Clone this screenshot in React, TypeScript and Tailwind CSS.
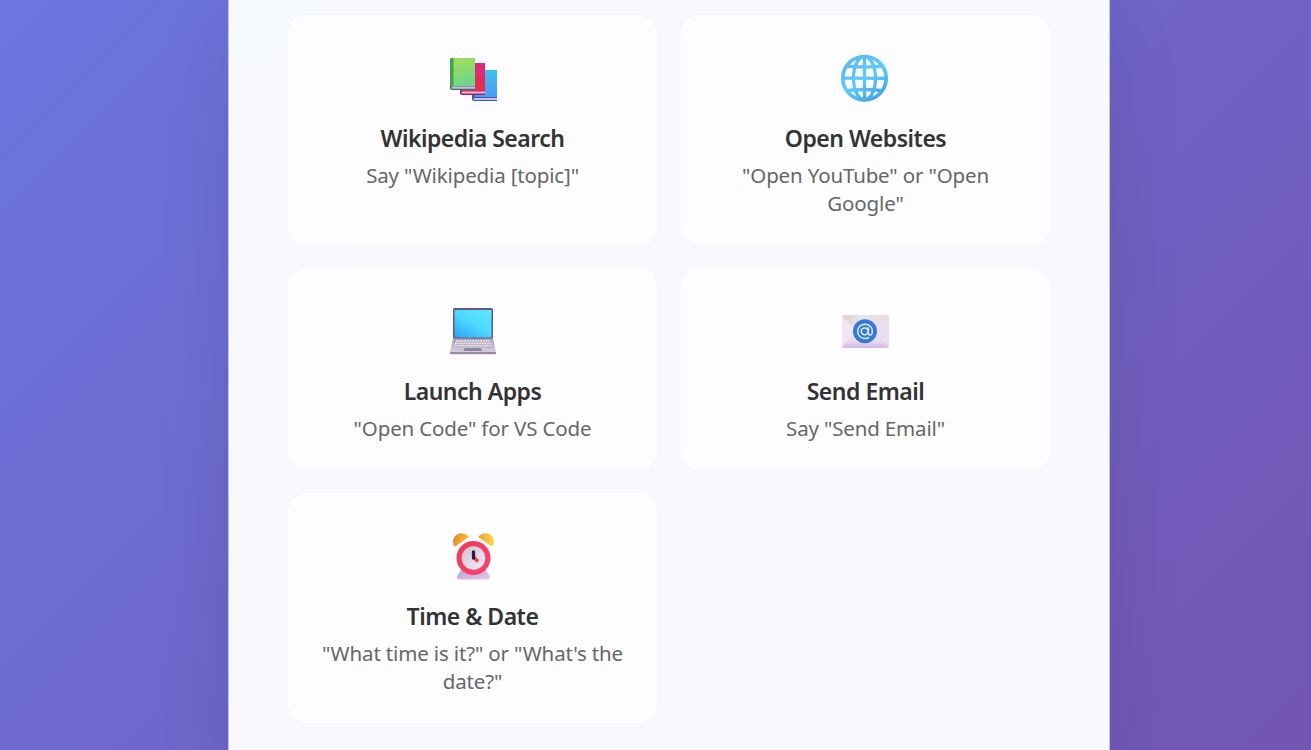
import React from "react";

function Books() {
  return (
    <svg viewBox="0 0 66 66" className="h-[66px] w-[66px]">
      <defs>
        <linearGradient id="bg1" x1="0" y1="0" x2="0.3" y2="1"><stop stopColor="#a6df54" /><stop offset="1" stopColor="#72d68a" /></linearGradient>
        <linearGradient id="bg2" x1="0" y1="0" x2="0" y2="1"><stop stopColor="#d92a7c" /><stop offset="1" stopColor="#e62d49" /></linearGradient>
        <linearGradient id="bg3" x1="0" y1="0" x2="0.2" y2="1"><stop stopColor="#3cc5f2" /><stop offset="1" stopColor="#4a9ff0" /></linearGradient>
      </defs>
      <path d="M33 25H56q1 0 1 1V56H34q-2 0-2-2V26z" fill="#2765bd" />
      <path d="M35 25H56q1 0 1 1V52H35z" fill="url(#bg3)" />
      <path d="M34 53H57v2H34q-1-1 0-2z" fill="#d9b4ed" />
      <path d="M21 18H44q1 0 1 1V50H22q-2 0-2-2V19z" fill="#b31d55" />
      <path d="M23 18H44q1 0 1 1V46H23z" fill="url(#bg2)" />
      <path d="M22 46.5H45v2H22q-1-1 0-2z" fill="#e5bce9" />
      <path d="M12 13H34q1 0 1 1V45H12q-2 0-2-2V15q0-2 2-2z" fill="#278064" />
      <path d="M12 13H34q1 0 1 1V41H10V15q0-2 2-2z" fill="url(#bg1)" />
      <path d="M12 13h1.500v28H10V15q0-2 2-2z" fill="#45a246" />
      <path d="M12 41.500H35v2.300H12q-1-1.100 0-2.300z" fill="#d2b7e5" />
    </svg>
  );
}

function Globe() {
  return (
    <svg viewBox="0 0 66 66" className="mr-[2px] h-[66px] w-[66px]" fill="none">
      <defs>
        <linearGradient id="gg" gradientUnits="userSpaceOnUse" x1="18" y1="12" x2="44" y2="57"><stop stopColor="#5bb9f3" /><stop offset="0.5" stopColor="#5ccbfc" /><stop offset="1" stopColor="#449fe8" /></linearGradient>
      </defs>
      <g stroke="url(#gg)" strokeWidth="3.300">
        <circle cx="32.500" cy="33.200" r="21.700" strokeWidth="3.700" />
        <ellipse cx="32.500" cy="33.200" rx="11" ry="21.700" />
        <path d="M32.400 11L32.600 56M10 33.100L55 33.300M14 20.600q5 1.400 18.500 1.400t18.500-1.400M14 46.200q5-1.700 18.500-1.700t18.500 1.700" />
      </g>
    </svg>
  );
}

function Laptop() {
  return (
    <svg viewBox="0 0 66 66" className="h-[66px] w-[66px]">
      <defs>
        <linearGradient id="ls" x1="0" y1="1" x2="0.8" y2="0"><stop stopColor="#2ba3f2" /><stop offset="0.55" stopColor="#4dd8ff" /><stop offset="1" stopColor="#5ce5ff" /></linearGradient>
        <linearGradient id="lb" x1="0" y1="0" x2="0" y2="1"><stop stopColor="#aaa2b5" /><stop offset="1" stopColor="#d6cddd" /></linearGradient>
      </defs>
      <rect x="13" y="10" width="40" height="31" rx="1.500" fill="#62568a" />
      <rect x="14.500" y="12" width="37" height="27.500" fill="url(#ls)" />
      <path d="M13 40.500H53L56 54H10z" fill="url(#lb)" />
      <path d="M10 54H56v1.300q0 1-1 1H11q-1 0-1-1z" fill="#978ba6" />
      <path d="M16 43H50" stroke="#eee9f2" strokeWidth="1.500" strokeDasharray="1.700 1" />
      <path d="M15 45.400H51" stroke="#f1edf5" strokeWidth="1.300" strokeDasharray="1.700 1" />
      <path d="M14.500 47.500H52" stroke="#eee9f2" strokeWidth="1.200" strokeDasharray="1.700 1" />
      <path d="M24.500 50H41l1 3H23.500z" fill="#8c8697" />
    </svg>
  );
}

function Email() {
  return (
    <svg viewBox="0 0 66 66" className="mr-[2px] h-[66px] w-[66px]">
      <defs>
        <linearGradient id="eb" x1="0" y1="0" x2="0" y2="1"><stop stopColor="#e5dce1" /><stop offset="0.75" stopColor="#eee2f2" /><stop offset="1" stopColor="#d3b8e8" /></linearGradient>
        <linearGradient id="ef" x1="0" y1="0" x2="1" y2="0"><stop stopColor="#dcd1d3" /><stop offset="0.4" stopColor="#ebe4e9" /><stop offset="1" stopColor="#e8dde7" /></linearGradient>
      </defs>
      <rect x="10" y="17" width="47" height="33" rx="2" fill="url(#eb)" />
      <path d="M10 20L27 34 10 48z" fill="#f0e6f2" />
      <path d="M57 20L40 34 57 48z" fill="#eadff0" />
      <path d="M11 18L30 34q3 2 7 0L56 18q-1-1-2-1H12z" fill="url(#ef)" />
      <path d="M11 48L28 34M56 48L39 34" stroke="#e3d1e8" strokeWidth="0.800" />
      <circle cx="33" cy="33.300" r="12" fill="#347bd5" />
      <g fill="none" stroke="#e1eaff" strokeWidth="1.500" strokeLinecap="round">
        <circle cx="32.700" cy="33.300" r="3.400" />
        <path d="M36.300 29.700V35q0 2 1.700 2c2 0 2.400-2 2.300-4-.2-4-3.200-6.800-7.300-6.800-4.300 0-7.300 3-7.300 7.100 0 4.300 3 7.100 7.300 7.100 1.700 0 2.700-.3 3.700-.8" />
      </g>
    </svg>
  );
}

function Clock() {
  return (
    <svg viewBox="0 0 66 66" className="h-[66px] w-[66px]">
      <defs>
        <linearGradient id="cl" x1="0" y1="0" x2="1" y2="0.400"><stop stopColor="#d9842d" /><stop offset="1" stopColor="#f8bd30" /></linearGradient>
        <linearGradient id="cr" x1="0" y1="0" x2="1" y2="0"><stop stopColor="#ec9f32" /><stop offset="1" stopColor="#fadb49" /></linearGradient>
        <linearGradient id="cb" x1="0" y1="0" x2="1" y2="1"><stop stopColor="#b69ccb" /><stop offset="1" stopColor="#e3cef2" /></linearGradient>
        <linearGradient id="cf" x1="0" y1="0" x2="1" y2="1"><stop stopColor="#cfc3d0" /><stop offset="1" stopColor="#f4e9f8" /></linearGradient>
        <linearGradient id="cc" x1="0" y1="0" x2="1" y2="1"><stop stopColor="#ea3d56" /><stop offset="1" stopColor="#ff416f" /></linearGradient>
      </defs>
      <path d="M22 46L17.500 52.500q-.5 1-.5 2 0 2 2 2H48q2 0 2-2 0-1-.5-2L45 46z" fill="url(#cb)" />
      <path d="M14 23c-2-4-1-9 3-11.500s8.500-1.300 11 1.500c1 1.300 0 2-1 2.300L16 23q-1 .8-2 0z" fill="url(#cl)" />
      <path d="M53 23c2-4 1-9-3-11.500s-8.500-1.300-11 1.500c-1 1.300 0 2 1 2.300L51 23q1 .8 2 0z" fill="url(#cr)" />
      <circle cx="33.500" cy="35" r="17" fill="url(#cc)" />
      <circle cx="33.500" cy="35" r="11.800" fill="url(#cf)" />
      <path d="M34 34.500L37 37.500" stroke="#ff414c" strokeWidth="3.600" strokeLinecap="round" />
      <path d="M33.500 28.800V35" stroke="#291c43" strokeWidth="3.300" strokeLinecap="round" />
    </svg>
  );
}

const features = [
  { icon: <Books />, title: "Wikipedia Search", text: 'Say "Wikipedia [topic]"' },
  { icon: <Globe />, title: "Open Websites", text: '"Open YouTube" or "Open Google"' },
  { icon: <Laptop />, title: "Launch Apps", text: '"Open Code" for VS Code' },
  { icon: <Email />, title: "Send Email", text: 'Say "Send Email"' },
  { icon: <Clock />, title: "Time & Date", text: '"What time is it?" or "What\'s the date?"' },
];

export default function App() {
  return (
    <div className="flex h-[750px] justify-center overflow-hidden bg-[linear-gradient(135deg,#6b76df_0%,#7355b2_100%)] pl-[27px] font-['Noto_Sans',sans-serif]">
      <main className="w-[882px] border-x border-[#c3c2eb] bg-linear-to-br from-[#f6f9fe] via-[#f8f8fd] via-30% to-[#f8f8fd] px-[59px] pt-[15px] shadow-[0_25px_70px_rgba(0,0,0,0.1)]">
        <div className="grid grid-cols-[369px_369px] gap-x-6 gap-y-[23px]">
          {features.map((f) => (
            <section key={f.title} className="flex flex-col items-center rounded-[19px] bg-[#fdfdff] px-[30px] pt-[30px] pb-[28px] text-center">
              {f.icon}
              <h3 className="mt-[9px] h-[36px] text-[23px] leading-[36px] font-semibold tracking-[-0.500px] text-[#333333]">{f.title}</h3>
              <p className="mt-[5px] text-[20.500px] leading-7 tracking-[-0.150px] text-[#666666]">{f.text}</p>
            </section>
          ))}
        </div>
      </main>
    </div>
  );
}
